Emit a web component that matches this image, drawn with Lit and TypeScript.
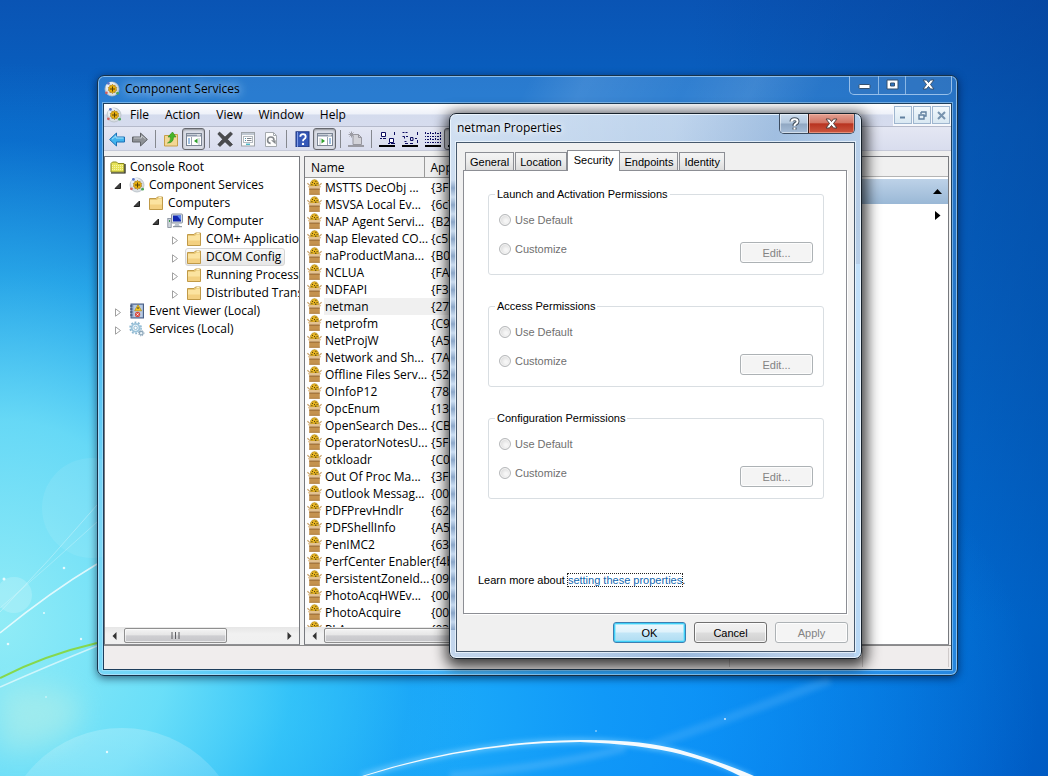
import { LitElement, html, css, svg, nothing } from "lit";
import { customElement } from "lit/decorators.js";
import { classMap } from "lit/directives/class-map.js";

/* ---------- icons ---------- */

const gearGlobe = (size: number) => html`<svg width=${size} height=${size} viewBox="0 0 16 16" aria-hidden="true">
  <circle cx="8" cy="8" r="7" fill="#d9dee2" stroke="#b4bcc4" stroke-width=".8" />
  <circle cx="7" cy="6" r="5" fill="#eceff2" />
  <path d="M8.5 3.2l1 1.3 1.6-.3.2 1.6 1.5.7-.7 1.4.7 1.4-1.5.7-.2 1.6-1.6-.3-1 1.3-1-1.3-1.6.3-.2-1.6-1.5-.7.7-1.4-.7-1.4 1.5-.7.2-1.6 1.6.3z" fill="#e8b010" stroke="#8a6408" stroke-width=".5" />
  <path d="M8.5 5.5v5M6 8h5" stroke="#5a4206" stroke-width="1" />
  <circle cx="4.4" cy="2.4" r="1.4" fill="#5a74c8" />
  <circle cx="2.4" cy="11.8" r="1.4" fill="#d06060" />
  <circle cx="13.6" cy="12.2" r="1.4" fill="#4aa658" />
</svg>`;

const folder = html`<svg width="16" height="16" viewBox="0 0 16 16" aria-hidden="true">
  <path d="M1.5 3.5h6.5l1.5-1.5h5v12.5h-13z" fill="#e9c876" stroke="#c09a48" />
  <path d="M2 5h7l1.2-1.2h3.8V14H2z" fill="#fbe3a0" />
  <path d="M2 9.5h12V14H2z" fill="#f3d081" />
  <path d="M10.5 2.6h3" stroke="#fff6cf" />
</svg>`;

const rootFolder = html`<svg width="16" height="16" viewBox="0 0 16 16" aria-hidden="true">
  <path d="M1 13V4.5L2.5 3h4L8 4.5h6V13z" fill="#e6e25a" stroke="#8a8a20" />
  <path d="M2 6.5h11M2 8.5h11M2 10.5h11" stroke="#f8f6a8" stroke-dasharray="1 1" />
  <path d="M1 14h14V5" fill="none" stroke="#1c1c08" stroke-width="1.2" />
</svg>`;

const computer = html`<svg width="16" height="16" viewBox="0 0 16 16" aria-hidden="true">
  <rect x="4.5" y="1" width="11" height="9" rx="1" fill="#d6dde4" stroke="#8892a0" />
  <rect x="6" y="2.5" width="8" height="6" fill="#1228b0" />
  <path d="M10 2.5h4v5z" fill="#5a86f0" />
  <path d="M8.5 10.5h3l1.5 3h-6z" fill="#b9c2cc" /><path d="M6 13.7h9" stroke="#7b8592" />
  <rect x=".8" y="5.5" width="3.4" height="9" fill="#cfd5dc" stroke="#808a98" stroke-width=".8" />
  <path d="M2.5 7v2" stroke="#3a9a4a" />
</svg>`;

const eventLog = html`<svg width="16" height="16" viewBox="0 0 16 16" aria-hidden="true">
  <rect x="2" y="1" width="12.5" height="14" fill="#8fa6c8" stroke="#4a5f86" />
  <rect x="4.5" y="2" width="9" height="12" fill="#b9cbe2" />
  <path d="M1 3h2.5M1 6h2.5M1 9h2.5M1 12h2.5" stroke="#2d3f60" />
  <path d="M9 1.8l3.6 6H5.6z" fill="#f7c91d" stroke="#a97f06" stroke-width=".6" />
  <path d="M9 4v2" stroke="#333" />
  <circle cx="8.6" cy="11.4" r="2.6" fill="#d8483e" /><path d="M7.6 10.4l2 2M9.6 10.4l-2 2" stroke="#fff" stroke-width=".9" />
</svg>`;

const gears = html`<svg width="16" height="16" viewBox="0 0 17 16" aria-hidden="true">
  <circle cx="7" cy="6.8" r="4.2" fill="#eaf4fa" stroke="#9cc3da" stroke-width="2" />
  <circle cx="7" cy="6.8" r="5.9" fill="none" stroke="#8cb6d0" stroke-width="1.6" stroke-dasharray="2 1.7" />
  <circle cx="7" cy="6.8" r="1.8" fill="#fff" stroke="#8fb6ce" />
  <circle cx="13" cy="12.4" r="1.9" fill="#eaf4fa" stroke="#8aa4b8" stroke-width="1.2" />
  <circle cx="13" cy="12.4" r="2.9" fill="none" stroke="#8aa4b8" stroke-dasharray="1.2 1.1" />
</svg>`;

const packageIcon = html`<svg width="15" height="16" viewBox="0 0 15 16" aria-hidden="true">
  <path d="M3.5 7V3.8L5 1.4 7.5.6 10 1.4l1.5 2.4V7z" fill="#e6b424" stroke="#b08a20" stroke-width=".6" />
  <path d="M5 3.4h1M8.4 2.4h1M7 4.6h1M9.6 4.6h1M4.4 5.6h1M8 6.2h1.4" stroke="#4a390c" />
  <path d="M.4 4.2L3 6.6M14.6 4.2L12 6.6" stroke="#c9a26c" stroke-width="1.2" />
  <path d="M.8 7h13.4l-1.5 2.6H2.3z" fill="#e3c291" />
  <path d="M2.2 9.6h10.6v6H2.2z" fill="#c4924f" />
  <path d="M2.2 10.1h10.6" stroke="#946630" />
  <path d="M2.2 15.3h10.6" stroke="#a87638" stroke-width=".8" />
</svg>`;

const pointer = (open: boolean) =>
  open
    ? html`<svg width="8" height="8" viewBox="0 0 8 8"><path d="M6.5 1v5.5H1z" fill="#404040" stroke="#202020" /></svg>`
    : html`<svg width="8" height="9" viewBox="0 0 8 9"><path d="M1.5 .8v7.4L6.5 4.5z" fill="#fff" stroke="#a0a0a0" /></svg>`;

const toolArt: Record<string, unknown> = {
  Back: svg`<path d="M.6 8.5L7.5 2V6H15.5V11H7.5V15Z" fill="#42b4ee" stroke="#1a6fb5"/><path d="M3 8.2L7 4.8V7H14.5" fill="none" stroke="#a9e2fb"/>`,
  Forward: svg`<path d="M15.4 8.5L8.5 2V6H.5V11H8.5V15Z" fill="#8e9196" stroke="#606368"/><path d="M2 7H9.5V4.8L13.6 8" fill="none" stroke="#c5c8cc"/>`,
  Up: svg`<path d="M1.5 4.5h5l1-1h7v11.5h-13z" fill="#f3d794" stroke="#c79f4a"/><path d="M4.5 12q3.5-1 3-6H5L9.5 1 13 6h-2.5q0 6-6 6z" fill="#45b52a" stroke="#2c8a1a" stroke-width=".6"/>`,
  Tree: svg`<rect x=".5" y="2.5" width="15" height="12" fill="#fff" stroke="#7b8594"/><path d="M1 4.5h14" stroke="#8d98aa" stroke-width="2"/><path d="M11 4h3" stroke="#f4f4f4"/><path d="M5.5 6v8" stroke="#9aa3b0"/><path d="M2 8h2M2 10h2M2 12h2" stroke="#3f7fc0"/><path d="M11.5 7.5v5L8 10z" fill="#2fa02c"/><path d="M13 7v7" stroke="#b7bec8"/>`,
  Delete: svg`<path d="M2.5 1L8 6 13.5 1 15.5 3 10.5 8.3 15.5 13.5 13 15.5 8 10.8 3 15.5.8 13.5 5.6 8.3.8 3z" fill="#4a4b4e" stroke="#2f3033" stroke-width=".6"/>`,
  Properties: svg`<rect x="1.5" y="1.5" width="13" height="13.5" fill="#fbfbfb" stroke="#9da2a7"/><path d="M2 3h12" stroke="#c0c8d2" stroke-width="2"/><rect x="3.5" y="5.5" width="9" height="6" fill="#fff" stroke="#b4bac0"/><path d="M5 7.5h1M5 9.5h1" stroke="#4a90a8"/><path d="M7 7.5h4.5M7 9.5h4.5" stroke="#7d848c"/><path d="M6 13.3h4" stroke="#4fb7c9" stroke-width="1.5"/>`,
  Refresh: svg`<path d="M2.5 1.5h8l3 3v11h-11z" fill="#fcfcfc" stroke="#a4a9ae"/><path d="M10.5 1.5v3h3" fill="none" stroke="#a4a9ae"/><path d="M7.6 12.4a3.2 3.2 0 1 1 3.4-3.2" fill="none" stroke="#85898d" stroke-width="1.6"/><path d="M8 9.2h4.6v4z" fill="#85898d"/>`,
  Help: svg`<rect x="2" y=".8" width="13" height="15" fill="#3558b8" stroke="#1c3480"/><path d="M3.5 1v15" stroke="#7f9be8"/><path d="M6.3 5.8q0-2.6 2.7-2.6t2.7 2.5q0 1.5-1.4 2.3T9 10.3" fill="none" stroke="#fff" stroke-width="1.8"/><circle cx="9" cy="12.9" r="1.2" fill="#fff"/>`,
  Actions: svg`<rect x=".5" y="2.5" width="15" height="12" fill="#fff" stroke="#7b8594"/><path d="M1 4.5h14" stroke="#8d98aa" stroke-width="2"/><path d="M11 4h3" stroke="#f4f4f4"/><path d="M10.5 6v8" stroke="#9aa3b0"/><path d="M12 8h2M12 10h2M12 12h2" stroke="#3f7fc0"/><path d="M4.5 7.5v5L8 10z" fill="#2fa02c"/><path d="M3 7v7" stroke="#b7bec8"/>`,
  New: svg`<path d="M5 3.5h5.500l3 3v7H5z" fill="#d2d2d8" stroke="#96969e"/><path d="M10.500 3.500v3h3" fill="none" stroke="#96969e"/><path d="M3.500 .5v6M.5 3.500h6M1.500 1.500l4 4M5.500 1.500l-4 4" stroke="#9c9ca4"/><path d="M0 15h16" stroke="#9a9aa2" stroke-width="2"/>`,
  Large: svg`<path d="M2.5 1.5h4v4h-4zM10.5 7.5h4v4h-4z" fill="#fff" stroke="#0c0c60"/><path d="M1 7.5h2M4 7.5h3M9 12.5h2M12 12.5h4M15.5 1v3" stroke="#0c0c60"/><path d="M0 15h16" stroke="#000" stroke-width="2"/>`,
  Small: svg`<path d="M.5 1.5h2M3.5 1.5h2M.5 5.5h2v2M4 5.5h2M8.5 6.5h2.5v3H8.5zM13 7.5h2M2.5 10.5h2M3 12.5h3M8 12.5h3M15.5 1v3M15.5 9v3" fill="none" stroke="#0c0c60"/><path d="M0 15h16" stroke="#000" stroke-width="2"/>`,
  List: svg`<path d="M0 2.5h16M0 5.5h16M0 8.5h16M0 11.5h16" stroke="#0c0c60" stroke-dasharray="1 1 2 1"/><path d="M0 1.5h1M5 1.5h1M10 1.5h1M5 7.5h1M10 7.5h1M15.5 1v1M15.5 4v1M15.5 7v1" stroke="#0c0c60"/><path d="M0 15h16" stroke="#000" stroke-width="2"/>`,
  Detail: svg`<path d="M1 3.5h14M1 6.5h14M1 9.5h14" stroke="#0c0c60"/><path d="M0 15h16" stroke="#000" stroke-width="2"/>`,
};

/* ---------- data ---------- */

type Node = { label: string; level: number; icon: unknown; open?: boolean; selected?: boolean };

const nodes: Node[] = [
  { label: "Console Root", level: 0, icon: rootFolder },
  { label: "Component Services", level: 1, icon: gearGlobe(16), open: true },
  { label: "Computers", level: 2, icon: folder, open: true },
  { label: "My Computer", level: 3, icon: computer, open: true },
  { label: "COM+ Applicatio", level: 4, icon: folder, open: false },
  { label: "DCOM Config", level: 4, icon: folder, open: false, selected: true },
  { label: "Running Processe", level: 4, icon: folder, open: false },
  { label: "Distributed Transa", level: 4, icon: folder, open: false },
  { label: "Event Viewer (Local)", level: 1, icon: eventLog, open: false },
  { label: "Services (Local)", level: 1, icon: gears, open: false },
];

const apps: [string, string][] = [
  ["MSTTS DecObj ...", "{3F6"],
  ["MSVSA Local Ev...", "{6c7"],
  ["NAP Agent Servi...", "{B29"],
  ["Nap Elevated CO...", "{c5b"],
  ["naProductMana...", "{B07"],
  ["NCLUA", "{FA"],
  ["NDFAPI", "{F3B"],
  ["netman", "{27A"],
  ["netprofm", "{C9"],
  ["NetProjW", "{A5"],
  ["Network and Sh...", "{7A"],
  ["Offline Files Serv...", "{525"],
  ["OInfoP12", "{782"],
  ["OpcEnum", "{134"],
  ["OpenSearch Des...", "{CB"],
  ["OperatorNotesU...", "{5F1"],
  ["otkloadr", "{C0"],
  ["Out Of Proc Ma...", "{3F5"],
  ["Outlook Messag...", "{000"],
  ["PDFPrevHndlr", "{623"],
  ["PDFShellInfo", "{A5"],
  ["PenIMC2", "{636"],
  ["PerfCenter Enabler", "{f4b"],
  ["PersistentZoneId...", "{090"],
  ["PhotoAcqHWEv...", "{00f"],
  ["PhotoAcquire", "{00f"],
  ["PLA", "{032"],
];

const tools: (string | null)[] = [
  "Back", "Forward", null, "Up", "Tree", null, "Delete", "Properties", "Refresh", null,
  "Help", "Actions", null, "New", null, "Large", "Small", "List", "Detail",
];
const pressed = new Set(["Tree", "Actions", "Detail"]);

const shared = css`
  :host, * { box-sizing: border-box; }
  button { font: inherit; color: inherit; margin: 0; padding: 0; border: 0; background: none; }
  svg { display: block; flex: none; }
`;

/* ---------- desktop wallpaper ---------- */

@customElement("desk-wallpaper")
class DeskWallpaper extends LitElement {
  static styles = css`
    :host {
      display: block;
      position: absolute;
      inset: 0;
      background:
        radial-gradient(ellipse 46% 72% at 0% 80%, rgba(158, 244, 246, 0.9) 0%, rgba(118, 230, 248, 0.85) 36%, rgba(60, 200, 246, 0.6) 62%, rgba(24, 150, 236, 0.2) 86%, rgba(20, 140, 230, 0) 100%),
        radial-gradient(ellipse 75% 60% at 24% 92%, rgba(40, 190, 252, 1) 0%, rgba(20, 160, 250, 0.8) 45%, rgba(0, 120, 240, 0) 100%),
        linear-gradient(90deg, rgba(0, 56, 140, 0) 66%, rgba(0, 56, 140, 0.45) 100%),
        linear-gradient(180deg, #0a54b4 0%, #0864c4 16%, #0670d4 45%, #0080f0 80%, #0078f0 100%);
    }
    svg { width: 100%; height: 100%; display: block; }
  `;
  render() {
    return html`<svg viewBox="0 0 1048 776" preserveAspectRatio="none" aria-hidden="true">
      <defs>
        <filter id="soft" x="-20%" y="-20%" width="140%" height="140%"><feGaussianBlur stdDeviation="2.5" /></filter>
        <filter id="fine" x="-20%" y="-20%" width="140%" height="140%"><feGaussianBlur stdDeviation=".6" /></filter>
        <filter id="wide" x="-50%" y="-50%" width="200%" height="200%"><feGaussianBlur stdDeviation="14" /></filter>
        <linearGradient id="dome" x1="0" y1="0" x2="0" y2="1"><stop offset="0" stop-color="#fff" stop-opacity=".2" /><stop offset=".5" stop-color="#fff" stop-opacity=".04" /></linearGradient>
      </defs>
      <path d="M0 690Q90 680 80 715T0 750z" fill="#d0f4e0" opacity=".4" filter="url(#wide)" />
      <circle cx="122" cy="850" r="122" fill="url(#dome)" />
      <circle cx="92" cy="508" r="50" fill="#fff" opacity=".08" />
      <circle cx="14" cy="595" r="18" fill="#fff" opacity=".18" />
      <g fill="none" stroke="#fff">
        <path d="M0 612Q50 560 97 505" stroke-opacity=".3" />
        <path d="M0 608Q50 565 97 522" stroke-opacity=".25" />
        <path d="M0 633Q50 592 97 564" stroke-opacity=".75" stroke-width="1.5" />
        <path d="M0 687Q50 665 97 646" stroke-opacity=".6" stroke-width="1.5" />
        <path d="M450 776Q560 765 625 748" stroke="#6fc0fa" stroke-opacity=".35" stroke-width="8" filter="url(#soft)" />
        <path d="M650 746Q740 715 830 680" stroke="#6fc0fa" stroke-opacity=".25" stroke-width="9" filter="url(#soft)" />
        <path d="M362 776Q470 742 580 741Q680 742 752 778" stroke="#7fd0ff" stroke-opacity=".6" stroke-width="6" filter="url(#soft)" />
      </g>
      <path d="M362 776Q470 741 580 740Q640 739 680 750 722 762 754 776H740Q715 763 680 754 640 744 580 742Q470 743 365 776z" fill="#fff" opacity=".95" filter="url(#fine)" />
      <path d="M0 678Q45 655 97 643" fill="none" stroke="#86d84c" stroke-width="2" />
      <g fill="#fff" opacity=".8">
        <circle cx="4" cy="579" r="1.5" /><circle cx="64" cy="568" r="1.3" /><circle cx="44" cy="613" r="1" />
        <circle cx="8" cy="644" r="1.3" /><circle cx="81" cy="639" r="1.2" /><circle cx="107" cy="752" r="1.2" />
        <circle cx="46" cy="697" r=".8" /><circle cx="725" cy="719" r="1" /><circle cx="596" cy="731" r=".8" />
      </g>
    </svg>`;
  }
}

/* ---------- scroll bar ---------- */

@customElement("scroll-strip")
class ScrollStrip extends LitElement {
  static styles = [shared, css`
    :host { display: grid; grid-template-columns: 19px 1fr 19px; height: 17px; padding: 1px 0; background: linear-gradient(#e6e6e6, #f1f1f1 40%, #f0f0f0); align-items: center; }
    .arrow { display: flex; align-items: center; justify-content: center; height: 15px; }
    .track { height: 15px; }
    .thumb { width: 66%; min-width: 102px; height: 15px; border: 1px solid #8f8f8f; border-radius: 2px; background: linear-gradient(#f4f4f4, #e6e6e6 46%, #cfcfd2 52%, #c6c6c9); box-shadow: inset 0 0 0 1px rgba(255, 255, 255, 0.6); display: flex; align-items: center; justify-content: center; }
  `];
  render() {
    return html`
      <button class="arrow" aria-label="Scroll left"><svg width="5" height="8" viewBox="0 0 5 8"><path d="M4.5 0v8L.5 4z" fill="#333" /></svg></button>
      <div class="track"><div class="thumb"><svg width="9" height="7" viewBox="0 0 9 7"><path d="M1 0v7M4.5 0v7M8 0v7" stroke="#5c5c60" /></svg></div></div>
      <button class="arrow" aria-label="Scroll right"><svg width="5" height="8" viewBox="0 0 5 8"><path d="M.5 0v8L4.5 4z" fill="#333" /></svg></button>`;
  }
}

/* ---------- Component Services console ---------- */

@customElement("console-window")
class ConsoleWindow extends LitElement {
  static styles = [shared, css`
    :host { display: flex; flex-direction: column; padding: 0 5px 5px; border: 1px solid #17324a; border-radius: 7px;
      background: linear-gradient(115deg, rgba(255,255,255,0) 38%, rgba(255,255,255,.1) 43%, rgba(255,255,255,.03) 52%, rgba(255,255,255,.1) 58%, rgba(255,255,255,0) 64%), rgba(120, 190, 245, 0.3);
      box-shadow: inset 0 0 0 1px rgba(200, 232, 255, 0.6), 0 2px 8px rgba(0, 10, 40, 0.6); font: 12px/18px "Open Sans", "Noto Sans", sans-serif; color: #000; }
    .title { display: flex; align-items: flex-start; height: 27px; padding-left: 1px; }
    .name { display: flex; align-items: center; gap: 5px; height: 26px; flex: 1; }
    .glow { text-shadow: 0 0 8px rgba(190, 225, 255, 1), 0 0 12px rgba(160, 210, 255, 0.9), 0 0 14px rgba(160, 210, 255, 0.8); }
    .caps { display: flex; height: 19px; border: 1px solid rgba(170, 205, 240, 0.85); border-top: 0; border-radius: 0 0 5px 5px; background: rgba(60, 120, 190, 0.35); }
    .cap { width: 27px; display: flex; align-items: center; justify-content: center; padding-bottom: 2px; border-left: 1px solid rgba(170, 205, 240, 0.75); }
    .cap:first-child { border-left: 0; width: 28px; }
    .cap:last-child { width: 46px; }
    .client { flex: 1; min-height: 0; display: flex; flex-direction: column; border: 1px solid #1d3e5c; outline: 1px solid rgba(200, 235, 255, 0.45); background: #f0f0f0; }
    .menu { display: flex; height: 23px; align-items: center; padding-left: 2px; background: linear-gradient(#fff, #eef1f9 45%, #d4dbed 50%, #d6dcee); border-bottom: 1px solid #b5bacb; }
    .menu .item { padding: 0 8px; height: 22px; }
    .fill { flex: 1; }
    .mdi { display: flex; gap: 1px; height: 22px; padding: 2px 1px 1px; background: #f6f8fc; }
    .child { width: 18px; height: 18px; border: 1px solid #9fb6cf; background: linear-gradient(#f2f8fc, #d9e8f2); display: flex; align-items: center; justify-content: center; }
    .tools { display: flex; height: 24px; align-items: center; padding-left: 1px; background: linear-gradient(#e4e7f3, #d9ddee); border-bottom: 1px solid #c5c9d8; }
    .tool { width: 23px; height: 22px; display: flex; align-items: center; justify-content: center; border-radius: 3px; }
    .tool.on { border: 1px solid #66686f; background: #dadde6; box-shadow: inset 0 1px 2px rgba(0, 0, 0, 0.35); }
    .sep { width: 8px; height: 18px; display: flex; justify-content: center; }
    .sep::before { content: ""; width: 1px; background: #85888f; }
    .panes { flex: 1; min-height: 0; display: grid; grid-template-columns: 196px minmax(0, 1fr) 200px; gap: 4px; padding-top: 5px; border-bottom: 1px solid #8a8a8a; }
    .pane { display: flex; flex-direction: column; min-height: 0; overflow: hidden; background: #fff; border: 1px solid #77797e; border-bottom-color: #8f8f93; }
    .scroll { flex: 1; min-height: 0; overflow: hidden; }
    .tree { padding: 1px 0 0; margin: 0; list-style: none; }
    .node { display: flex; align-items: center; height: 18px; white-space: nowrap; }
    .lvl0 { padding-left: 5px; } .lvl1 { padding-left: 9px; } .lvl2 { padding-left: 28px; } .lvl3 { padding-left: 47px; } .lvl4 { padding-left: 66px; }
    .twist { flex: none; width: 15px; display: flex; align-items: center; padding-top: 2px; }
    .tag { flex: none; display: flex; align-items: center; gap: 4px; height: 18px; }
    .tag.sel { border: 1px solid #d6d6d6; border-radius: 3px; background: linear-gradient(#fafafa, #e6e6e6); margin-left: -1px; padding-right: 3px; }
    .list { border-collapse: collapse; table-layout: fixed; width: 100%; }
    .list th { height: 20px; padding: 2px 6px 0; font-weight: 400; text-align: left; background: #f0f0f0; border-right: 1px solid #9a9a9a; border-bottom: 1px solid #9a9a9a; line-height: 17px; }
    .list th.first { width: 119px; }
    .list td { height: 17px; padding: 0 7px; line-height: 17px; white-space: nowrap; }
    .list td.first { padding: 0 0 0 2px; }
    .list tbody::before { content: ""; display: block; height: 1px; }
    .cell { display: flex; align-items: center; gap: 2px; height: 17px; }
    .cell span { padding: 0 1px; flex: 1 0 auto; }
    .cur .cell span, .cur td:last-child { background: #f0f0f0; }
    .acts { border-left-color: #999; margin-right: 2px; }
    .head { height: 20px; background: #f0f0f0; border-bottom: 1px solid #b4b4b4; }
    .group { height: 27px; border-top: 2px solid #fff; background: linear-gradient(#bdd2e8, #9ab8d6); display: flex; align-items: center; justify-content: flex-end; padding-right: 6px; }
    .more { height: 22px; width: 100%; display: flex; align-items: center; justify-content: flex-end; padding-right: 7px; }
    .status { height: 23px; display: flex; justify-content: flex-end; background: #f0eded; padding: 2px 2px 2px 0; }
    .part { border-right: 1px solid #cfcaca; width: 133px; }
    .part.last { width: 86px; }
  `];

  render() {
    return html`
      <div class="title">
        <div class="name">${gearGlobe(16)}<span class="glow">Component Services</span></div>
        <div class="caps">
          <button class="cap" aria-label="Minimize"><svg width="13" height="12" viewBox="0 0 13 12"><rect x="1" y="6.5" width="11" height="4" rx=".8" fill="#fff" stroke="#35506e" /></svg></button>
          <button class="cap" aria-label="Maximize"><svg width="13" height="11" viewBox="0 0 13 11"><path d="M1 1h11v9H1zM4.5 4v3h4V4z" fill="#fff" fill-rule="evenodd" stroke="#35506e" /></svg></button>
          <button class="cap" aria-label="Close"><svg width="13" height="11" viewBox="0 0 13 11"><path d="M1 1h3.5l2 2.5 2-2.5H12L8.5 5.5 12 10H8.5l-2-2.5-2 2.5H1l3.5-4.5z" fill="#fff" stroke="#35506e" /></svg></button>
        </div>
      </div>
      <div class="client">
        <div class="menu">
          ${gearGlobe(16)}
          ${["File", "Action", "View", "Window", "Help"].map((m) => html`<button class="item">${m}</button>`)}
          <div class="fill"></div>
          <div class="mdi">
            <button class="child" aria-label="Minimize child"><svg width="8" height="8" viewBox="0 0 8 8"><path d="M1 6.5h5" stroke="#61809f" stroke-width="2" /></svg></button>
            <button class="child" aria-label="Restore child"><svg width="9" height="9" viewBox="0 0 9 9"><path d="M3 1h5v4H6.5M3 3V1M1 4h5v4H1z" fill="none" stroke="#61809f" stroke-width="1.4" /></svg></button>
            <button class="child" aria-label="Close child"><svg width="9" height="9" viewBox="0 0 9 9"><path d="M1 1l7 7M8 1L1 8" stroke="#7793ae" stroke-width="2" /></svg></button>
          </div>
        </div>
        <div class="tools">
          ${tools.map((t) => t
            ? html`<button class=${classMap({ tool: true, on: pressed.has(t) })} aria-label=${t}><svg width="16" height="16" viewBox="0 0 16 16">${toolArt[t]}</svg></button>`
            : html`<span class="sep"></span>`)}
        </div>
        <div class="panes">
          <div class="pane">
            <div class="scroll"><ul class="tree">
              ${nodes.map((n) => html`<li class="node lvl${n.level}">
                ${n.open === undefined ? nothing : html`<span class="twist">${pointer(n.open)}</span>`}
                <span class=${classMap({ tag: true, sel: !!n.selected })}>${n.icon}<span>${n.label}</span></span>
              </li>`)}
            </ul></div>
            <scroll-strip></scroll-strip>
          </div>
          <div class="pane">
            <div class="scroll">
              <table class="list">
                <thead><tr><th class="first">Name</th><th>App</th></tr></thead>
                <tbody>
                  ${apps.map(([name, id]) => html`<tr class=${classMap({ cur: name === "netman" })}>
                    <td class="first"><div class="cell">${packageIcon}<span>${name}</span></div></td><td>${id}</td>
                  </tr>`)}
                </tbody>
              </table>
            </div>
            <scroll-strip></scroll-strip>
          </div>
          <div class="pane acts">
            <div class="head"></div>
            <div class="group"><svg width="9" height="5" viewBox="0 0 9 5"><path d="M0 5h9L4.5 0z" /></svg></div>
            <button class="more" aria-label="More actions"><svg width="6" height="9" viewBox="0 0 6 9"><path d="M0 0v9l5.5-4.5z" /></svg></button>
          </div>
        </div>
        <div class="status"><div class="part"></div><div class="part"></div><div class="part last"></div></div>
      </div>`;
  }
}

/* ---------- netman Properties dialog ---------- */

@customElement("properties-dialog")
class PropertiesDialog extends LitElement {
  static styles = [shared, css`
    :host { display: block; padding: 0 6px 6px; border: 1px solid #18222c; border-radius: 7px; width: 413px;
      background:
        linear-gradient(#c2e0fa, #b4d4f2) right 150px / 7px 100% no-repeat,
        repeating-linear-gradient(rgba(120, 150, 190, 0) 0, rgba(90, 125, 170, 0.55) 8px, rgba(120, 150, 190, 0) 17px) left 66px / 7px 450px no-repeat,
        linear-gradient(100deg, rgba(255,255,255,.4), rgba(255,255,255,.15) 45%, rgba(120,160,205,.3) 65%, rgba(255,255,255,.15) 85%),
        linear-gradient(#b4cdea, #a9c4e2 20%, #b3cfee 60%, #a9c4e4);
      box-shadow: inset 0 0 0 1px rgba(240, 248, 255, 0.85), 1px 4px 14px 4px rgba(0, 0, 0, 0.75); font: 11px/14px "Liberation Sans", Arial, sans-serif; color: #000; }
    .title { display: flex; align-items: flex-start; height: 28px; font: 12px/18px "Open Sans", "Noto Sans", sans-serif; }
    .name { flex: 1; padding: 5px 0 0 1px; text-shadow: 0 0 6px #fff, 0 0 8px #fff; }
    .caps { display: flex; height: 20px; border: 1px solid #3c4c60; border-top: 0; border-radius: 0 0 5px 5px; overflow: hidden; }
    .cap { display: flex; align-items: center; justify-content: center; }
    .ask { width: 28px; background: linear-gradient(#cbdbed, #b4c8de 48%, #90a7c2 52%, #a6bdd8); box-shadow: inset 0 0 0 1px rgba(255, 255, 255, 0.5); }
    .x { width: 46px; border-left: 1px solid #3c1a14; background: linear-gradient(#e3a193, #d27463 46%, #b83320 52%, #cc5840); box-shadow: inset 0 0 0 1px rgba(255, 200, 180, 0.5); }
    .client { border: 1px solid #46586c; outline: 1px solid rgba(240, 248, 255, 0.75); background: #f0f0f0; padding: 7px 7px 8px 6px; }
    .tabs { display: flex; align-items: flex-end; padding-left: 2px; height: 20px; }
    .tab { height: 18px; padding: 0 4px; border: 1px solid #8c8e94; border-bottom: 0; margin-right: 1px; background: linear-gradient(#f4f4f4, #ececec 50%, #dcdcdc); white-space: nowrap; }
    .tab.on { position: relative; height: 21px; margin: 0 -1px -1px -1px; padding: 0 6px 2px; background: #fff; z-index: 1; }
    .page { border: 1px solid #8c8e94; background: #fff; padding: 16px 22px 26px 24px; box-shadow: 1px 1px 0 #fff; }
    fieldset { margin: 0 0 24px; min-width: 0; height: 88px; padding: 12px 10px 0; border: 1px solid #d9dee2; border-radius: 3px; display: flex; justify-content: space-between; }
    legend { padding: 0 2px; margin-left: -4px; line-height: 14px; }
    .radios { display: flex; flex-direction: column; gap: 15px; }
    label { display: flex; align-items: center; gap: 4px; height: 14px; color: #6f6f6f; }
    input { appearance: none; width: 12px; height: 12px; margin: 0; border: 1px solid #b6b8ba; border-radius: 50%; background: radial-gradient(circle at 60% 60%, #f6f6f6 15%, #dcdcdc 70%); box-shadow: inset 0 0 0 1px #f4f4f4; }
    .btn { width: 73px; height: 21px; border: 1px solid #707070; border-radius: 3px; background: linear-gradient(#f2f2f2, #ebebeb 48%, #dddddd 52%, #cfcfcf); box-shadow: inset 0 0 0 1px rgba(255, 255, 255, 0.8); }
    .btn:disabled { border-color: #adb2b5; background: #f4f4f4; color: #838383; }
    .btn.default { border-color: #3c7fb1; background: linear-gradient(#eef8fd, #dff2fb 48%, #c2e6f7 52%, #aedcf2); box-shadow: inset 0 0 0 1px #40d0f8, inset 0 0 0 2px rgba(120, 225, 250, 0.6); }
    .edit { margin-top: 29px; }
    .learn { margin: 74px 0 0 -10px; }
    a { color: #1166b0; outline: 1px dotted #222; text-decoration: none; }
    .actions { display: flex; justify-content: flex-end; gap: 8px; margin: 8px -1px 0 0; }
  `];

  group(title: string, key: string) {
    return html`<fieldset>
      <legend>${title}</legend>
      <div class="radios">
        <label><input type="radio" name=${key} disabled />Use Default</label>
        <label><input type="radio" name=${key} disabled />Customize</label>
      </div>
      <button class="btn edit" disabled>Edit...</button>
    </fieldset>`;
  }

  render() {
    return html`
      <div class="title">
        <div class="name">netman Properties</div>
        <div class="caps">
          <button class="cap ask" aria-label="Help"><svg width="11" height="14" viewBox="0 0 11 14"><g fill="none" stroke="#46525f" stroke-width="4"><path d="M2.5 4.5q0-2.3 3-2.3t3 2.2q0 1.4-1.6 2.2T5.5 9" /><path d="M5.5 10.5v2" /></g><g fill="none" stroke="#fff" stroke-width="2"><path d="M2.5 4.8q0-2.6 3-2.6t3 2.2q0 1.4-1.6 2.2T5.5 9" /><path d="M5.5 10.5v2" /></g></svg></button>
          <button class="cap x" aria-label="Close"><svg width="13" height="11" viewBox="0 0 13 11"><path d="M1 1h3.5l2 2.5 2-2.5H12L8.5 5.5 12 10H8.5l-2-2.5-2 2.5H1l3.5-4.5z" fill="#fff" stroke="#50403e" /></svg></button>
        </div>
      </div>
      <div class="client">
        <div class="tabs" role="tablist">
          ${["General", "Location", "Security", "Endpoints", "Identity"].map((t) => html`<button role="tab" aria-selected=${t === "Security"} class=${classMap({ tab: true, on: t === "Security" })}>${t}</button>`)}
        </div>
        <div class="page">
          ${this.group("Launch and Activation Permissions", "launch")}
          ${this.group("Access Permissions", "access")}
          ${this.group("Configuration Permissions", "config")}
          <div class="learn">Learn more about <a href="#">setting these properties</a>.</div>
        </div>
        <div class="actions">
          <button class="btn default">OK</button><button class="btn">Cancel</button><button class="btn" disabled>Apply</button>
        </div>
      </div>`;
  }
}

@customElement("app-root")
class AppRoot extends LitElement {
  static styles = css`
    :host { display: block; position: relative; height: 100vh; overflow: hidden; }
    .console { position: absolute; inset: 75px 90px 100px 97px; }
    .dialog { position: absolute; left: 449px; top: 113px; }
  `;
  render() {
    return html`
      <desk-wallpaper></desk-wallpaper>
      <console-window class="console"></console-window>
      <properties-dialog class="dialog"></properties-dialog>`;
  }
}
